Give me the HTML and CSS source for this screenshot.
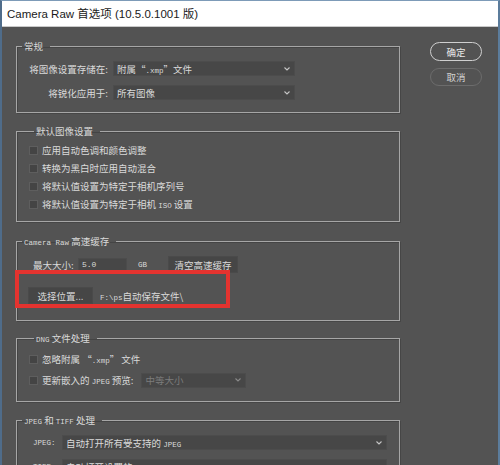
FILE: index.html
```html
<!DOCTYPE html>
<html lang="zh-CN">
<head>
<meta charset="utf-8">
<title>Camera Raw 首选项</title>
<link rel="stylesheet" href="styles.css">
</head>
<body>
<div class="win">
  <div class="titlebar">Camera Raw 首选项 (10.5.0.1001 版)</div>
  <div class="main">
    <div class="groups">
      <fieldset class="grp g1">
        <legend>常规</legend>
        <div class="frow">
          <span class="lbl1">将图像设置存储在:</span>
          <div class="sel s1"><span>附属“<span class="m">.xmp</span>”文件</span><svg class="chev" viewBox="0 0 6 4" width="6" height="4"><polyline points="0.5,0.5 3,3 5.5,0.5"/></svg></div>
        </div>
        <div class="frow">
          <span class="lbl1">将锐化应用于:</span>
          <div class="sel s1"><span>所有图像</span><svg class="chev" viewBox="0 0 6 4" width="6" height="4"><polyline points="0.5,0.5 3,3 5.5,0.5"/></svg></div>
        </div>
      </fieldset>

      <fieldset class="grp g2">
        <legend>默认图像设置</legend>
        <div class="crow"><span class="cb"></span><span>应用自动色调和颜色调整</span></div>
        <div class="crow"><span class="cb"></span><span>转换为黑白时应用自动混合</span></div>
        <div class="crow"><span class="cb"></span><span>将默认值设置为特定于相机序列号</span></div>
        <div class="crow"><span class="cb"></span><span>将默认值设置为特定于相机 <span class="m">ISO</span> 设置</span></div>
      </fieldset>

      <fieldset class="grp g3">
        <legend><span class="m">Camera Raw</span> 高速缓存</legend>
        <div class="r3a">
          <span class="lbl3">最大大小:</span>
          <div class="inp"><span class="m">5.0</span></div>
          <span class="m gb">GB</span>
          <div class="pbtn clear">清空高速缓存</div>
        </div>
        <div class="r3b">
          <div class="pbtn choose">选择位置...</div>
          <span class="path"><span class="m">F:\ps</span>自动保存文件\</span>
        </div>
      </fieldset>

      <fieldset class="grp g4">
        <legend><span class="m">DNG</span> 文件处理</legend>
        <div class="crow"><span class="cb"></span><span>忽略附属 “<span class="m">.xmp</span>” 文件</span></div>
        <div class="crow">
          <span class="cb"></span><span>更新嵌入的 <span class="m">JPEG</span> 预览:</span>
          <div class="sel s4 dis"><span>中等大小</span><svg class="chev" viewBox="0 0 6 4" width="6" height="4"><polyline points="0.5,0.5 3,3 5.5,0.5"/></svg></div>
        </div>
      </fieldset>

      <fieldset class="grp g5">
        <legend><span class="m">JPEG</span> 和 <span class="m">TIFF</span> 处理</legend>
        <div class="frow">
          <span class="lbl5 m">JPEG:</span>
          <div class="sel s5"><span>自动打开所有受支持的 <span class="m">JPEG</span></span><svg class="chev" viewBox="0 0 6 4" width="6" height="4"><polyline points="0.5,0.5 3,3 5.5,0.5"/></svg></div>
        </div>
        <div class="frow">
          <span class="lbl5 m">TIFF:</span>
          <div class="sel s5"><span>自动打开设置的 <span class="m">TIFF</span></span><svg class="chev" viewBox="0 0 6 4" width="6" height="4"><polyline points="0.5,0.5 3,3 5.5,0.5"/></svg></div>
        </div>
      </fieldset>
    </div>

    <div class="btns">
      <div class="dbtn ok">确定</div>
      <div class="dbtn cancel">取消</div>
    </div>
  </div>
  <div class="mark"></div>
</div>
</body>
</html>
```

FILE: styles.css
```css
html, body {
  margin: 0;
  padding: 0;
  background: #535353;
}
.win {
  position: relative;
  width: 500px;
  height: 465px;
  box-sizing: border-box;
  overflow: hidden;
  background: #535353;
  border-left: 2px solid #4f6c8a;
  border-right: 2px solid #5b7c9c;
  border-top: 1px solid #7d9bb8;
  font-family: "Noto Sans CJK SC", "Noto Sans", sans-serif;
  font-size: 9.5px;
  color: #dadada;
}
.titlebar {
  height: 26px;
  background: #ffffff;
  border-bottom: 1px solid #c9c9c9;
  box-sizing: border-box;
  padding-left: 5px;
  font-family: "Liberation Sans", "Noto Sans CJK SC", sans-serif;
  font-size: 11.5px;
  line-height: 27px;
  color: #1a1a1a;
  white-space: nowrap;
}
.main {
  display: flex;
  align-items: flex-start;
  padding: 12px 0 0 14px;
}
.groups {
  width: 384px;
  display: flex;
  flex-direction: column;
}
.grp {
  margin: 0;
  min-width: 0;
  border: 1px solid #a6a6a6;
  box-shadow: 1px 1px 0 #464646, inset 1px 1px 0 #444;
  display: flex;
  flex-direction: column;
}
.grp legend {
  margin-left: 5px;
  padding: 0 7px 0 2px;
  line-height: 14px;
  height: 14px;
  white-space: nowrap;
}
.m {
  font-family: "Liberation Mono", "DejaVu Sans Mono", monospace;
  font-size: 7.5px;
}
.g1 { padding: 8px 0 12px 0; gap: 9px; }
.g2 { margin-top: 11px; padding: 3px 0 8px 12px; }
.g3 { margin-top: 12px; padding: 8px 0 16px 0; gap: 14px; }
.g4 { margin-top: 10px; padding: 5px 0 12px 12px; gap: 3px; }
.g5 { margin-top: 11px; padding: 8px 0 12px 0; gap: 9px; }

.frow {
  display: flex;
  align-items: center;
  height: 15px;
}
.lbl1 {
  width: 91px;
  text-align: right;
  margin-right: 5px;
  white-space: nowrap;
}
.lbl5 {
  width: 29px;
  margin-left: 16px;
  font-size: 7.5px;
}
.sel {
  height: 15px;
  box-sizing: border-box;
  background: #474747;
  border: 1px solid #4c4c4c;
  display: flex;
  align-items: center;
  justify-content: space-between;
  padding: 0 4px 0 3px;
  white-space: nowrap;
}
.s1 { width: 182px; }
.s4 { width: 105px; margin-left: 8px; }
.s5 { width: 325px; }
.dis { color: #7c7c7c; }
.chev {
  fill: none;
  stroke: #c6c6c6;
  stroke-width: 1.1;
}
.dis .chev { stroke: #8a8a8a; }

.crow {
  display: flex;
  align-items: center;
  height: 18px;
  white-space: nowrap;
}
.cb {
  width: 9px;
  height: 9px;
  box-sizing: border-box;
  background: #444;
  border: 1px solid #5e5e5e;
  margin-right: 4px;
  flex: none;
}

.r3a {
  display: flex;
  align-items: center;
  height: 17px;
  padding-left: 16px;
  white-space: nowrap;
}
.lbl3 { width: 45px; }
.inp {
  width: 49px;
  height: 14px;
  box-sizing: border-box;
  background: #474747;
  border: 1px solid #4c4c4c;
  padding-left: 3px;
  display: flex;
  align-items: center;
}
.inp .m { font-size: 8px; }
.gb { margin-left: 11px; width: 30px; }
.pbtn {
  height: 17px;
  box-sizing: border-box;
  background: #464646;
  border: 1px solid #4a4a4a;
  display: flex;
  align-items: center;
  justify-content: center;
  white-space: nowrap;
}
.clear { width: 70px; }
.r3b {
  display: flex;
  align-items: center;
  height: 17px;
  padding-left: 11px;
  white-space: nowrap;
}
.choose { width: 65px; }
.path { margin-left: 7px; }

.btns {
  margin-left: 30px;
  padding-top: 3px;
  display: flex;
  flex-direction: column;
  gap: 7px;
}
.dbtn {
  width: 52px;
  height: 19px;
  box-sizing: border-box;
  border-radius: 10px;
  display: flex;
  align-items: center;
  justify-content: center;
  font-size: 9.5px;
}
.ok {
  border: 1px solid #cfcfcf;
  color: #e8e8e8;
}
.cancel {
  height: 18px;
  border: 1px solid #6c6c6c;
  color: #d2d2d2;
}
.mark {
  position: absolute;
  left: 13px;
  top: 269px;
  width: 215px;
  height: 38px;
  box-sizing: border-box;
  border: 4px solid #e4332f;
}
```
